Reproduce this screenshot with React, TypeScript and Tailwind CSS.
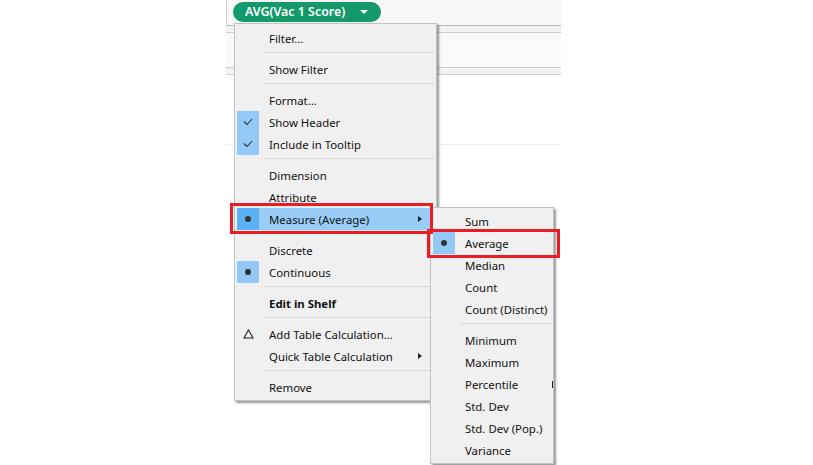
import React from "react";

type Row =
  | "sep"
  | {
      label: string;
      icon?: "check" | "dot" | "delta";
      checked?: boolean;
      sub?: boolean;
      bold?: boolean;
      active?: boolean;
    };

const mainItems: Row[] = [
  { label: "Filter..." },
  "sep",
  { label: "Show Filter" },
  "sep",
  { label: "Format..." },
  { label: "Show Header", icon: "check", checked: true },
  { label: "Include in Tooltip", icon: "check", checked: true },
  "sep",
  { label: "Dimension" },
  { label: "Attribute" },
  { label: "Measure (Average)", icon: "dot", checked: true, sub: true, active: true },
  "sep",
  { label: "Discrete" },
  { label: "Continuous", icon: "dot", checked: true },
  "sep",
  { label: "Edit in Shelf", bold: true },
  "sep",
  { label: "Add Table Calculation...", icon: "delta" },
  { label: "Quick Table Calculation", sub: true },
  "sep",
  { label: "Remove" },
];

const subItems: Row[] = [
  { label: "Sum" },
  { label: "Average", icon: "dot", checked: true },
  { label: "Median" },
  { label: "Count" },
  { label: "Count (Distinct)" },
  "sep",
  { label: "Minimum" },
  { label: "Maximum" },
  { label: "Percentile" },
  { label: "Std. Dev" },
  { label: "Std. Dev (Pop.)" },
  { label: "Variance" },
];

const Icon = ({ kind }: { kind?: string }) => {
  if (kind === "check")
    return (
      <svg width="10" height="8" viewBox="0 0 10 8">
        <path d="M1 3.5 L4 6.5 L9 1" fill="none" stroke="#333" strokeWidth="1.1" />
      </svg>
    );
  if (kind === "dot") return <div className="w-[6px] h-[6px] rounded-full bg-[#333]" />;
  if (kind === "delta")
    return (
      <svg width="11" height="10" viewBox="0 0 11 10">
        <path d="M5.5 1 L10 9 L1 9 Z" fill="none" stroke="#222" strokeWidth="1.1" />
      </svg>
    );
  return null;
};

const MenuList = ({ items }: { items: Row[] }) => (
  <div>
    {items.map((it, i) =>
      it === "sep" ? (
        <div key={i} className="h-[9px] pt-[3px] pl-[28px]">
          <div className="h-px bg-[#d6d6d6]" />
        </div>
      ) : (
        <div
          key={i}
          className={`flex items-center h-[22px] ${it.active ? "bg-[#99cdf7]" : ""}`}
        >
          <div
            className={`w-[22px] h-full flex items-center justify-center ${
              it.checked ? (it.active ? "bg-[#5cb0f5]" : "bg-[#93c9f6]") : ""
            }`}
          >
            <Icon kind={it.icon} />
          </div>
          <span
            className={`ml-[10px] pt-[1px] flex-1 text-[11.4px] leading-none text-[#111] whitespace-nowrap ${
              it.bold ? "font-bold" : ""
            }`}
          >
            {it.label}
          </span>
          {it.sub && (
            <div className="mr-[12px] w-0 h-0 border-y-[3.5px] border-y-transparent border-l-[4px] border-l-[#222]" />
          )}
        </div>
      )
    )}
  </div>
);

export default function App() {
  return (
    <div
      className="relative w-[813px] h-[465px] bg-white overflow-hidden"
      style={{ fontFamily: '"Noto Sans", "Open Sans", sans-serif' }}
    >
      {/* background panel */}
      <div className="ml-[226px] w-[335px]">
        <div className="h-[26px] bg-[#f8f8f8] border-l border-[#cfcfcf] border-b border-b-[#b9b9b9]" />
        <div className="h-[7px] bg-[#f2f2f2] border-b border-[#cdcdcd]" />
        <div className="h-[35px] bg-[#fafafa] border-b border-[#cdcdcd]" />
        <div className="h-[7px] bg-[#f2f2f2] border-b border-[#cdcdcd]" />
        <div className="h-[70px] bg-white border-b border-[#efefef]" />
        <div className="h-[252px] flex justify-start">
          <div className="ml-[167px] self-end w-[2px] h-[6px] bg-[#777]" />
        </div>
      </div>

      {/* field pill */}
      <div className="absolute left-[233px] top-[2px] h-[20px] w-[148px] rounded-full bg-[#14996b] flex items-center pl-[12px]">
        <span className="text-white text-[12.4px] font-semibold leading-none">AVG(Vac 1 Score)</span>
        <div className="ml-auto mr-[13px] w-0 h-0 border-x-[4px] border-x-transparent border-t-[4px] border-t-white" />
      </div>

      {/* main menu */}
      <div className="absolute left-[234px] top-[23px] w-[203px] bg-[#f0f0f0] border border-[#c2c2c2] px-[2px] pt-[3px] pb-[2px] shadow-[2px_2px_2px_rgba(0,0,0,0.4)]">
        <MenuList items={mainItems} />
      </div>

      {/* sub menu */}
      <div className="absolute left-[430px] top-[207px] w-[124px] bg-[#f0f0f0] border border-[#c2c2c2] px-[2px] pt-[2px] pb-[2px] shadow-[2px_2px_2px_rgba(0,0,0,0.4)]">
        <MenuList items={subItems} />
        <div className="absolute left-[121px] top-[173px] w-px h-[7px] bg-[#222]" />
      </div>

      {/* highlight boxes */}
      <div className="absolute left-[230px] top-[203px] w-[203px] h-[31px] border-[3px] border-[#ea1c24]" />
      <div className="absolute left-[427px] top-[229px] w-[133px] h-[29px] border-[3px] border-[#ea1c24]" />
    </div>
  );
}
